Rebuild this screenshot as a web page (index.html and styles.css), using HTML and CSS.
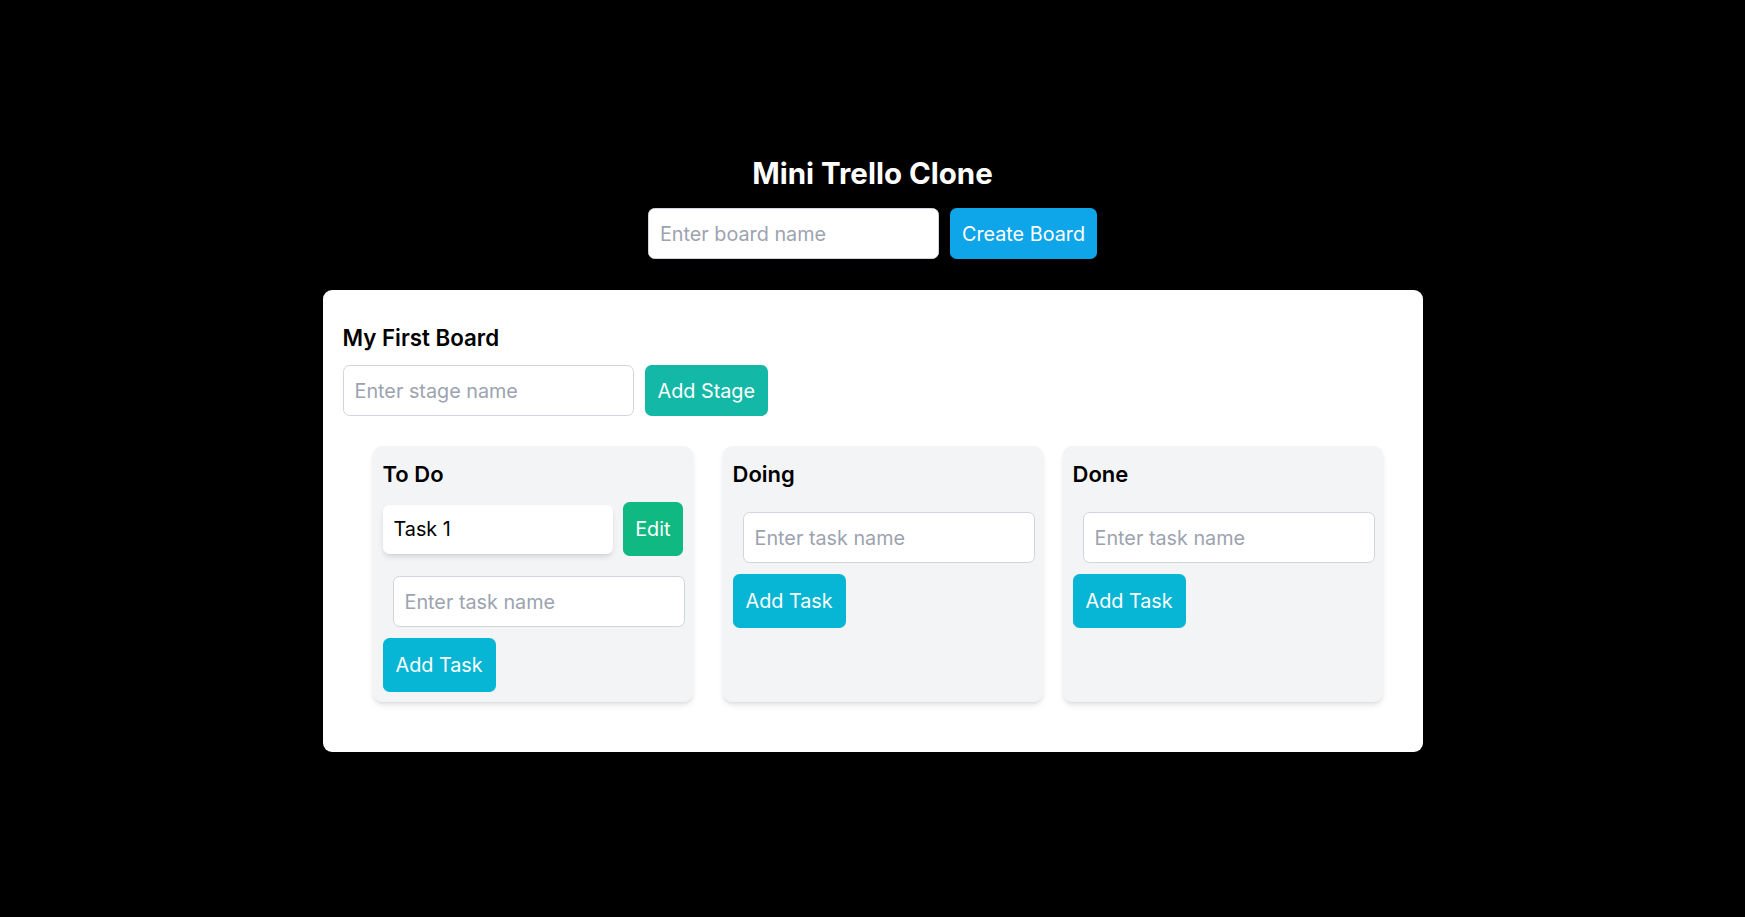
FILE: index.html
```html
<!DOCTYPE html>
<html lang="en">
<head>
<meta charset="utf-8">
<title>Mini Trello Clone</title>
<link rel="stylesheet" href="styles.css">
</head>
<body>
<main class="app">
  <h1 class="app-title">Mini Trello Clone</h1>
  <div class="create-row">
    <input class="field" type="text" placeholder="Enter board name">
    <button class="btn btn-sky">Create Board</button>
  </div>

  <section class="board">
    <h2 class="board-title">My First Board</h2>
    <div class="create-row create-row-left">
      <input class="field" type="text" placeholder="Enter stage name">
      <button class="btn btn-teal">Add Stage</button>
    </div>

    <div class="stages">
      <div class="stage stage-first">
        <h3 class="stage-title">To Do</h3>
        <div class="task-row">
          <div class="task-card">Task 1</div>
          <button class="btn btn-edit">Edit</button>
        </div>
        <input class="field task-field" type="text" placeholder="Enter task name">
        <button class="btn btn-cyan">Add Task</button>
      </div>
      <div class="stage stage-mid">
        <h3 class="stage-title">Doing</h3>
        <input class="field task-field" type="text" placeholder="Enter task name">
        <button class="btn btn-cyan">Add Task</button>
      </div>
      <div class="stage">
        <h3 class="stage-title">Done</h3>
        <input class="field task-field" type="text" placeholder="Enter task name">
        <button class="btn btn-cyan">Add Task</button>
      </div>
    </div>
  </section>
</main>
</body>
</html>
```

FILE: styles.css
```css
* { box-sizing: border-box; }

html, body {
  margin: 0;
  padding: 0;
  background: #000;
}

body {
  font-family: Inter, "Noto Sans", "Liberation Sans", sans-serif;
  color: #000;
  min-height: 100vh;
}

.app {
  display: flex;
  flex-direction: column;
  align-items: center;
  padding-top: 155px;
}

.app-title {
  margin: 0;
  color: #fff;
  font-size: 29.5px;
  line-height: 36px;
  font-weight: 700;
}

.create-row {
  display: flex;
  gap: 11px;
  margin-top: 17px;
  align-items: center;
}

.create-row-left {
  margin-top: 11px;
}

.field {
  width: 291px;
  height: 51px;
  padding: 0 11px;
  font-family: inherit;
  font-size: 19.8px;
  color: #111;
  background: #fff;
  border: 1px solid #d1d5db;
  border-radius: 6.6px;
  outline: none;
}

.field::placeholder {
  color: #9ca3af;
}

.btn {
  border: none;
  font-family: inherit;
  font-size: 19.8px;
  color: #fff;
  border-radius: 6.6px;
  padding: 0 13px;
  height: 51px;
  cursor: pointer;
}

.btn-sky { background: #0ea5e9; padding: 0 12px; }
.btn-teal { background: #14b8a6; }
.btn-edit { background: #10b981; height: 54px; padding: 0 12px; flex: none; }
.btn-cyan { background: #06b6d4; height: 54px; }

.board {
  margin-top: 31px;
  width: 1100px;
  background: #fff;
  border-radius: 9px;
  padding: 20px;
}

.board-title {
  margin: 12px 0 0;
  font-size: 22.3px;
  line-height: 32px;
  font-weight: 600;
}

.stages {
  display: flex;
  margin: 30px 20px 30px 30px;
}

.stage {
  width: 320px;
  flex: none;
  display: flex;
  flex-direction: column;
  align-items: flex-start;
  background: #f3f4f6;
  border-radius: 9px;
  padding: 13px 10px 10px;
  box-shadow: 0 4px 6px -1px rgba(0,0,0,0.1), 0 2px 4px -2px rgba(0,0,0,0.1);
}

.stage-first { margin-right: 30px; }
.stage-mid { margin-right: 20px; }

.stage-title {
  margin: 0 0 12px;
  font-size: 22px;
  line-height: 31px;
  font-weight: 600;
}

.task-row {
  align-self: stretch;
  display: flex;
  align-items: center;
  gap: 10px;
  margin-bottom: 10px;
}

.task-card {
  flex: 1;
  height: 49px;
  display: flex;
  align-items: center;
  padding: 0 11px;
  background: #fff;
  border-radius: 6.6px;
  font-size: 19.8px;
  box-shadow: 0 4px 6px -1px rgba(0,0,0,0.1), 0 2px 4px -2px rgba(0,0,0,0.1);
}

.task-field {
  display: block;
  flex: none;
  width: 292px;
  margin: 10px 0 11px 10px;
}
```
